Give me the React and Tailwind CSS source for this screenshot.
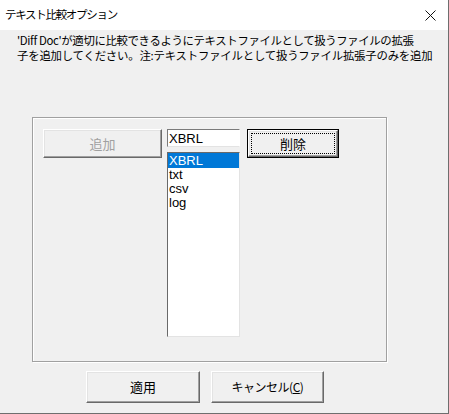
import React from "react";

const font = { fontFamily: '"Noto Sans CJK JP", "Liberation Sans", sans-serif' };

function Btn3D({ className = "", children }) {
  return (
    <div
      className={
        "flex items-center justify-center border border-t-white border-l-white border-r-[#696969] border-b-[#696969] bg-[#f0f0f0] shadow-[inset_-1px_-1px_0_#a0a0a0,inset_1px_1px_0_#e3e3e3] " +
        className
      }
    >
      {children}
    </div>
  );
}

export default function App() {
  return (
    <div
      className="w-[449px] h-[414px] bg-[#f0f0f0] border-r border-b border-[#6e6e6e] flex flex-col overflow-hidden text-black"
      style={font}
    >
      {/* title bar */}
      <div className="h-[30px] bg-white flex items-center justify-between pl-[5px] pr-[11px] shrink-0">
        <span className="text-[11.5px] tracking-[-1.3px] leading-none">テキスト比較オプション</span>
        <svg width="11" height="11" viewBox="0 0 11 11" className="mr-[1px]">
          <path d="M0.5 0.5 L10.5 10.5 M10.5 0.5 L0.5 10.5" stroke="#111" strokeWidth="1" />
        </svg>
      </div>

      {/* description */}
      <div className="mt-[3px] pl-[17px] text-[11.4px] leading-[15px] whitespace-nowrap">
        <div className="tracking-[-0.35px]">'Diff Doc'が適切に比較できるようにテキストファイルとして扱うファイルの拡張</div>
        <div className="tracking-[-0.2px]">子を追加してください。注:テキストファイルとして扱うファイル拡張子のみを追加</div>
      </div>

      {/* group box */}
      <div className="ml-[32px] mt-[54px] w-[355px] h-[245px] border border-[#a0a0a0] shadow-[1px_1px_0_#fff,inset_1px_1px_0_#fff] flex items-start pt-[11px] pl-[10px] shrink-0">
        <Btn3D className="w-[119px] h-[29px] text-[13px] text-[#a0a0a0]">追加</Btn3D>

        <div className="ml-[5px] flex flex-col w-[73px]">
          <div className="h-[18px] bg-white border-t border-l border-[#7a7a7a] border-r border-r-white border-b border-b-[#e3e3e3] flex items-center pl-[1px] text-[13px] leading-none" style={{ fontFamily: '"Liberation Sans", sans-serif' }}>
            XBRL
          </div>
          <div className="mt-[5px] h-[185px] bg-white border-t border-l border-[#696969] border-r border-r-[#e3e3e3] border-b border-b-[#e3e3e3] text-[13px] leading-[14px]" style={{ fontFamily: '"Liberation Sans", sans-serif' }}>
            <div className="h-[15px] bg-[#0078d7] text-white pl-[1px] flex items-center">XBRL</div>
            <div className="pl-[1px] h-[14px] flex items-center">txt</div>
            <div className="pl-[1px] h-[14px] flex items-center">csv</div>
            <div className="pl-[1px] h-[14px] flex items-center">log</div>
          </div>
        </div>

        <div className="ml-[7px] w-[92px] h-[29px] border border-black">
          <Btn3D className="w-full h-full text-[13px] p-[2px]">
            <div className="w-full h-full border border-dotted border-black flex items-center justify-center">削除</div>
          </Btn3D>
        </div>
      </div>

      {/* bottom buttons */}
      <div className="mt-[9px] ml-[86px] flex gap-[11px]">
        <Btn3D className="w-[114px] h-[32px] text-[13px]">適用</Btn3D>
        <Btn3D className="w-[113px] h-[32px] text-[12px] tracking-[-0.5px]">
          キャンセル(<span className="underline">C</span>)
        </Btn3D>
      </div>
    </div>
  );
}
